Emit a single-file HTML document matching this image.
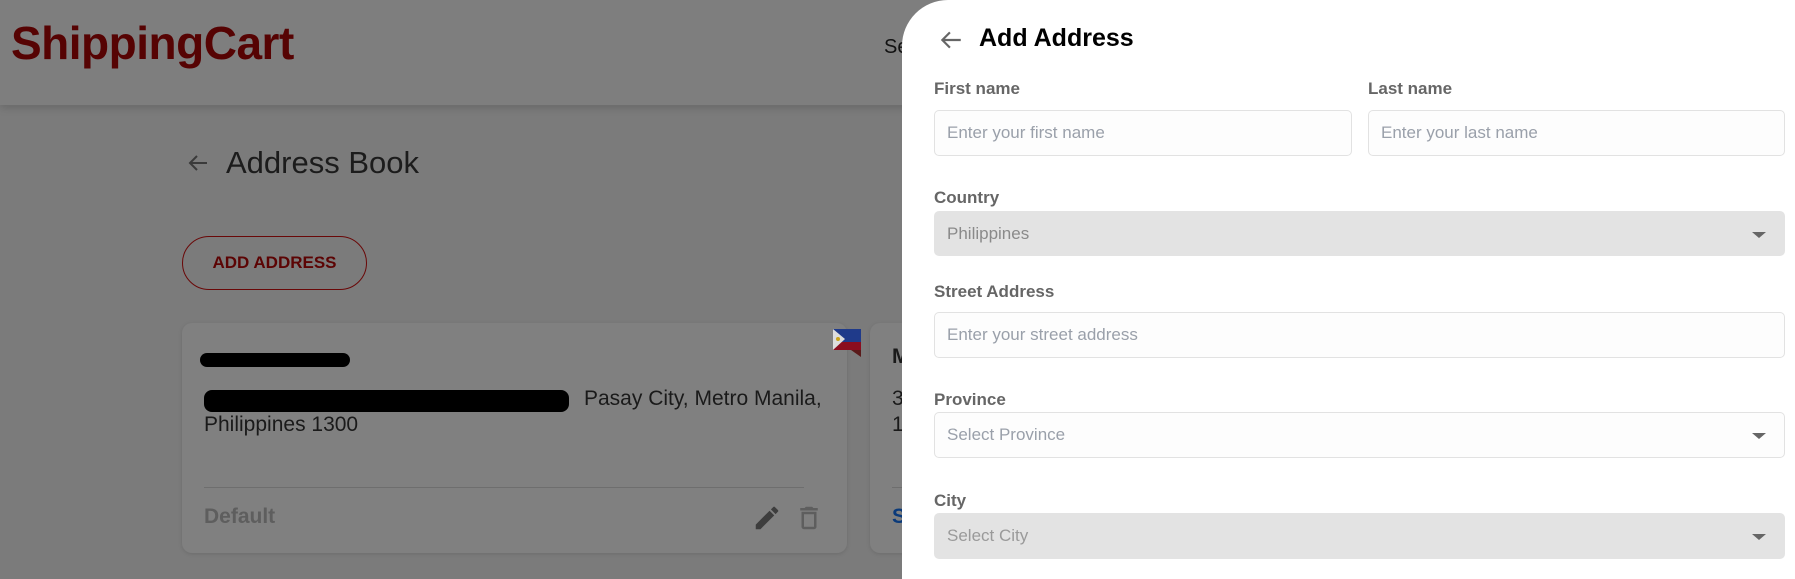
<!DOCTYPE html>
<html><head><meta charset="utf-8"><style>
*{box-sizing:border-box;margin:0;padding:0}
body{width:1795px;height:579px;overflow:hidden;position:relative;background:#7b7b7b;font-family:"Liberation Sans","DejaVu Sans",sans-serif}
.hdr{position:absolute;left:0;top:0;width:1795px;height:105px;background:#7e7e7e;box-shadow:0 3px 8px rgba(0,0,0,.15)}
.logo{position:absolute;left:11px;top:16px;font-size:46px;font-weight:bold;color:#560303;letter-spacing:-0.5px;font-family:"Liberation Sans",sans-serif}
.se{position:absolute;left:884px;top:36px;font-size:20px;color:#111}
.ab{position:absolute;left:226px;top:145px;font-size:31px;color:#1c1c1c}
.btn{position:absolute;left:182px;top:236px;width:185px;height:54px;border:1px solid #6a0808;border-radius:27px;color:#5c0404;font-size:17px;font-weight:bold;text-align:center;line-height:52px}
.card{position:absolute;top:323px;height:230px;background:#808080;border-radius:10px;box-shadow:0 1px 4px rgba(0,0,0,.12)}
.t{position:absolute;font-size:21px;color:#1a1a1a}
.pn{position:absolute;left:902px;top:0;width:893px;height:579px;background:#fff;border-top-left-radius:46px}
.lb{position:absolute;font-size:17px;font-weight:bold;color:#666}
.in{position:absolute;height:46px;border:1px solid #e2e2e2;border-radius:5px;background:#fdfdfd;font-size:17px;color:#9aa0aa;padding:0 12px;line-height:44px}
.sel{background:#e3e3e3;border-color:#e3e3e3;color:#8a8a8a}
.ar{position:absolute;right:18px;top:20px;width:0;height:0;border-left:7px solid transparent;border-right:7px solid transparent;border-top:6px solid #666}
</style></head><body>
<div class="hdr"><div class="logo">ShippingCart</div><div class="se">Se</div></div>
<svg style="position:absolute;left:186px;top:151px" width="24" height="24" viewBox="0 0 24 24"><path d="M21 12H4M11 5l-7 7 7 7" fill="none" stroke="#3a3a3a" stroke-width="2"/></svg>
<div class="ab">Address Book</div>
<div class="btn">ADD ADDRESS</div>
<div class="card" style="left:182px;width:665px">
 <div style="position:absolute;left:18px;top:30px;width:150px;height:14px;background:#000;border-radius:7px"></div>
 <div style="position:absolute;left:22px;top:67px;width:365px;height:22px;background:#000;border-radius:8px"></div>
 <div class="t" style="left:402px;top:64px">Pasay City, Metro Manila,</div>
 <div class="t" style="left:22px;top:90px">Philippines 1300</div>
 <div style="position:absolute;left:22px;top:164px;width:600px;height:1px;background:#6e6e6e"></div>
 <div class="t" style="left:22px;top:182px;color:#5e5e5e;font-weight:bold">Default</div>
 <svg style="position:absolute;left:570px;top:180px" width="30" height="30" viewBox="0 0 24 24"><path d="M3 17.25V21h3.75L17.8 9.94l-3.75-3.75L3 17.25zM20.7 7.04a1 1 0 000-1.41l-2.34-2.34a1 1 0 00-1.41 0l-1.83 1.83 3.75 3.75 1.83-1.83z" fill="#3d3d3d"/></svg>
 <svg style="position:absolute;left:612px;top:180px" width="30" height="30" viewBox="0 0 24 24"><path d="M6 19a2 2 0 002 2h8a2 2 0 002-2V7H6v12zM8 9h8v10H8V9zm7.5-5l-1-1h-5l-1 1H5v2h14V4z" fill="#5e5e5e"/></svg>
 <svg style="position:absolute;left:651px;top:6px" width="28" height="28" viewBox="0 0 28 28"><polygon points="0,0 28,0 28,13 0,13" fill="#1f3a8a"/><polygon points="0,13 28,13 28,21 0,21" fill="#8b0d1f"/><polygon points="18,21 28,21 28,28" fill="#5a1a1a"/><polygon points="0,0 12,10 0,21" fill="#ddd"/><circle cx="5" cy="10" r="2" fill="#c9a21a"/></svg>
</div>
<div class="card" style="left:870px;width:60px">
 <div class="t" style="left:22px;top:22px;font-weight:bold">M</div>
 <div class="t" style="left:22px;top:64px">3</div><div class="t" style="left:22px;top:90px">1</div>
 <div style="position:absolute;left:22px;top:164px;width:40px;height:1px;background:#6e6e6e"></div>
 <div class="t" style="left:22px;top:182px;color:#0a3a7a;font-weight:bold">S</div>
</div>
<div class="pn">
 <svg style="position:absolute;left:36px;top:27px" width="26" height="26" viewBox="0 0 24 24"><path d="M21 12H4M11 5l-7 7 7 7" fill="none" stroke="#666" stroke-width="2"/></svg>
 <div style="position:absolute;left:77px;top:24px;font-size:25px;font-weight:bold;color:#000">Add Address</div>
 <div class="lb" style="left:32px;top:79px">First name</div>
 <div class="in" style="left:32px;top:110px;width:418px">Enter your first name</div>
 <div class="lb" style="left:466px;top:79px">Last name</div>
 <div class="in" style="left:466px;top:110px;width:417px">Enter your last name</div>
 <div class="lb" style="left:32px;top:188px">Country</div>
 <div class="in sel" style="left:32px;top:211px;width:851px;height:45px">Philippines<div class="ar"></div></div>
 <div class="lb" style="left:32px;top:282px">Street Address</div>
 <div class="in" style="left:32px;top:312px;width:851px">Enter your street address</div>
 <div class="lb" style="left:32px;top:390px">Province</div>
 <div class="in" style="left:32px;top:412px;width:851px">Select Province<div class="ar"></div></div>
 <div class="lb" style="left:32px;top:491px">City</div>
 <div class="in sel" style="left:32px;top:513px;width:851px;color:#9a9a9a">Select City<div class="ar"></div></div>
</div>
</body></html>
